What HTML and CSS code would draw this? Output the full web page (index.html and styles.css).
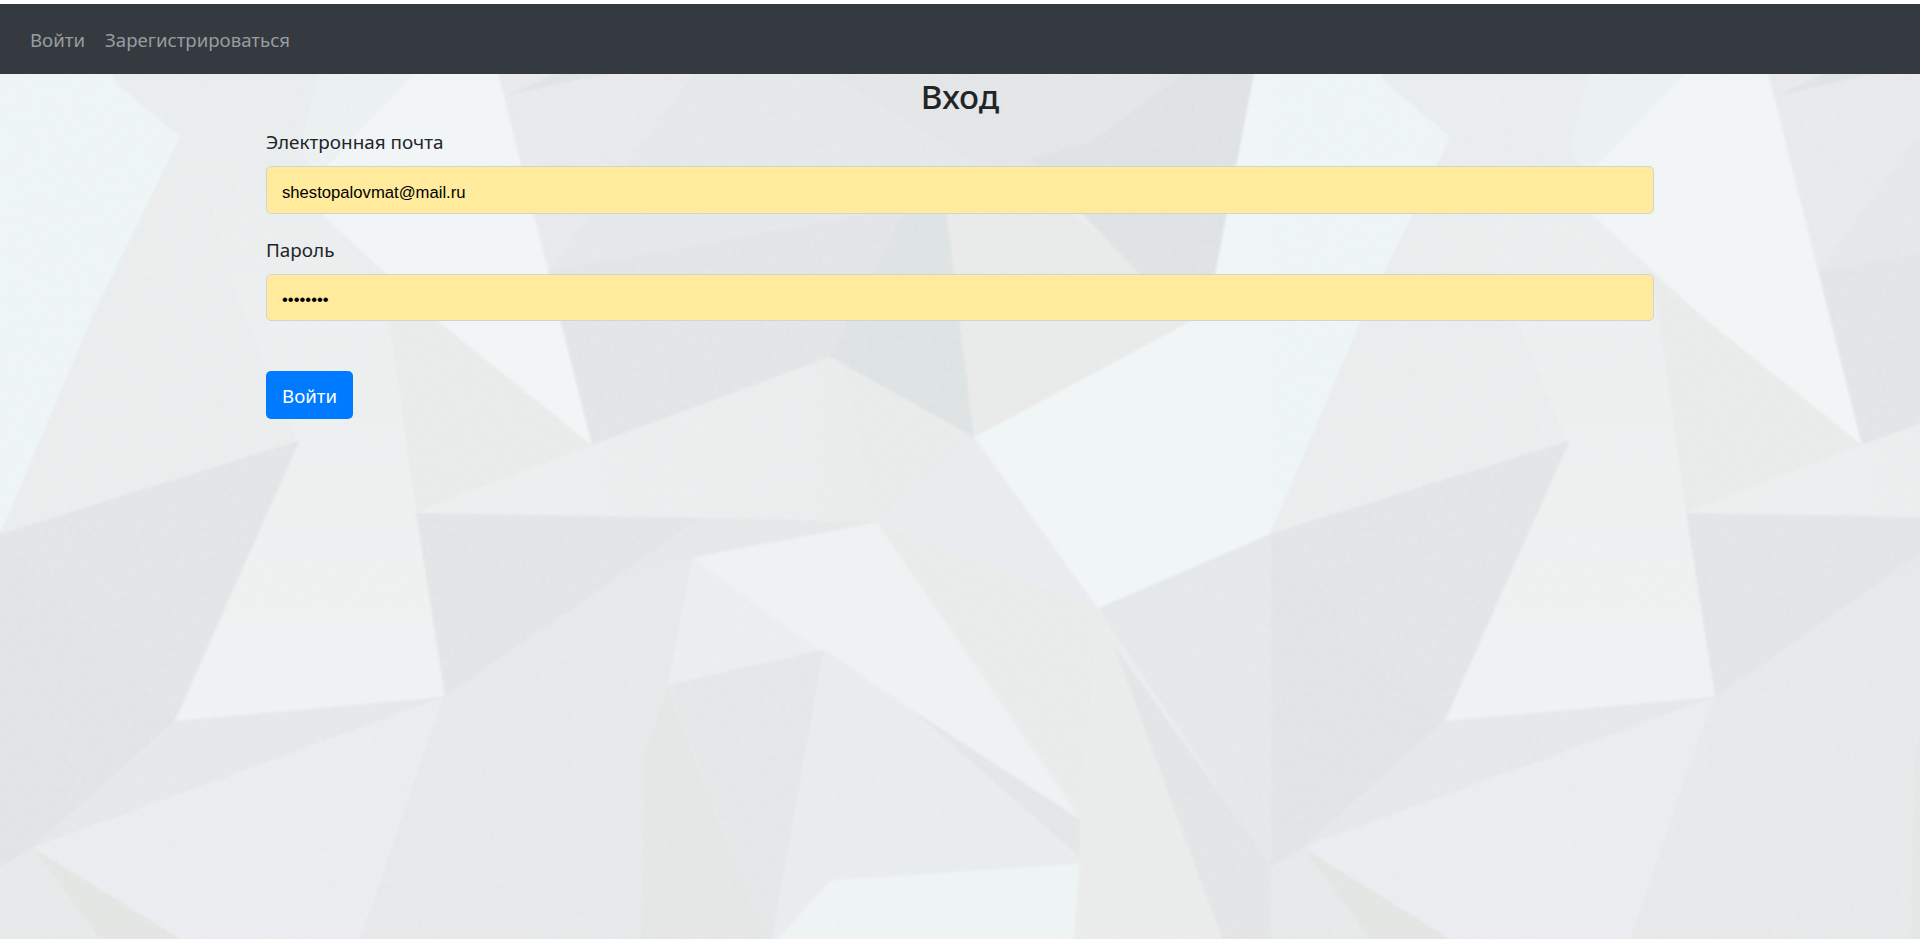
FILE: index.html
```html
<!DOCTYPE html>
<html lang="ru">
<head>
<meta charset="utf-8">
<title>Вход</title>
<link rel="stylesheet" href="styles.css">
</head>
<body>
<svg class="backdrop" viewBox="0 0 1920 939" preserveAspectRatio="none" aria-hidden="true">
  <defs>
    <filter id="soft" filterUnits="userSpaceOnUse" x="-10" y="-10" width="1940" height="960"><feGaussianBlur stdDeviation="1.1"/></filter>
    <filter id="grain" x="0" y="0" width="1" height="1">
      <feTurbulence type="fractalNoise" baseFrequency="0.22" numOctaves="2" seed="4"/>
      <feColorMatrix type="saturate" values="0.3"/>
      <feComponentTransfer><feFuncA type="linear" slope="0" intercept="1"/></feComponentTransfer>
    </filter>
    <linearGradient id="g1" x1="0" y1="0" x2="0" y2="1"><stop offset="0" stop-color="#e9ecec"/><stop offset="1" stop-color="#eff2f2"/></linearGradient>
    <linearGradient id="g2" x1="0" y1="0" x2="1" y2="0"><stop offset="0" stop-color="#ebefef"/><stop offset="1" stop-color="#e8eaea"/></linearGradient>
    <g id="tile">
      <rect width="1271" height="950" fill="#e8ecec"/>
      <path fill="#edf4f4" d="M-5 0H80L115 84 180 138 158 190 94 313 20 493 -5 540Z"/>
      <path fill="#eaf0f0" d="M320 70H425L320 185 300 150Z"/>
      <path fill="#e9ecec" d="M180 138 260 220 385 320 298 443 0 533 94 313Z"/>
      <path fill="url(#g1)" d="M200 155 300 170 385 300 416 512 445 695 175 719 298 443 230 280Z"/>
      <path fill="#f0f4f4" d="M420 70H497L592 445 437 321 300 195Z"/>
      <path fill="#e8eae9" d="M384 278 437 321 592 445 416 512Z"/>
      <path fill="#e2e3e5" d="M-5 535 0 533 300 440 175 719Z"/>
      <path fill="#dfe3e3" d="M-5 528 0 533 175 719 33 845 -5 868Z"/>
      <path fill="#e3e7e7" d="M175 719 445 695 33 845Z"/>
      <path fill="#e4e8e8" d="M-5 868 33 845 110 950H-5Z"/>
      <path fill="#e2e4e2" d="M33 845 205 950H110Z"/>
      <path fill="#e6e7e9" d="M443 695 560 620 640 950H355Z"/>
      <path fill="#e4e8e9" d="M443 695 640 560 700 550 668 690 640 950H540Z"/>
      <path fill="#e9ebef" d="M33 845 440 697 355 950H203Z"/>
      <path fill="url(#g2)" d="M592 445 830 357 974 437 877 522 416 512Z"/>
      <path fill="#e8eae9" d="M840 362 974 437 877 522Z"/>
      <path fill="#e0e4e4" d="M416 512 700 517 620 575 445 695Z"/>
      <path fill="#e4e6e7" d="M700 517 877 521 690 557 610 580Z"/>
      <path fill="#e7e8ea" d="M497 70H700L548 270Z"/>
      <path fill="#dfe2e3" d="M507 97 565 70H632Z"/>
      <path fill="#e3e7e8" d="M697 70H850L1000 170 940 200 548 271Z"/>
      <path fill="#e2e3e5" d="M548 271 945 200 895 240 830 357 592 445Z"/>
      <path fill="#e2e4e5" d="M820 70H1190L1050 172 985 170Z"/>
      <path fill="#dde1e1" d="M1190 70H1255L1212 290 1040 180Z"/>
      <path fill="#dce1e2" d="M945 190 974 437 830 357 900 220Z"/>
      <path fill="#e7e9e8" d="M942 178 1030 185 1212 318 974 437Z"/>
      <path fill="#dde1e1" d="M1030 160 1254 100 1210 290 1140 275Z"/>
      <path fill="#eff4f4" d="M974 437 1208 312 1255 70H1271V533L1098 607Z"/>
      <path fill="#e9eaee" d="M974 437 1098 607 1085 602 877 522Z"/>
      <path fill="#e3e7e8" d="M1098 607 1271 533V865Z"/>
      <path fill="#e2e3e5" d="M1104 630 1271 862V950H1227Z"/>
      <path fill="#e8eae9" d="M877 522 1100 607 1085 815Z"/>
      <path fill="#e9ebeb" d="M1100 607 1227 950H1070L1082 800Z"/>
      <path fill="#e9eded" d="M692 557 825 648 668 685Z"/>
      <path fill="#edf1f1" d="M692 557 877 522 1080 817 915 712 820 650Z"/>
      <path fill="#e2e6e6" d="M668 683 824 648 770 950Z"/>
      <path fill="#e3e5e4" d="M668 685 770 950H640L645 750Z"/>
      <path fill="#e9eaee" d="M824 648 915 710 835 875 770 950Z"/>
      <path fill="#e7ebeb" d="M912 708 1080 855V862L830 878Z"/>
      <path fill="#e1e5e6" d="M912 708 1080 817V855Z"/>
      <path fill="#edf3f3" d="M830 878 1080 861 1072 950H765Z"/>
    </g>
  </defs>
  <g filter="url(#soft)">
    <use href="#tile" x="1270"/>
    <use href="#tile"/>
  </g>
  <rect class="grain" width="1920" height="939" filter="url(#grain)"/>
</svg>
<nav class="navbar">
  <a class="nav-link" href="#">Войти</a>
  <a class="nav-link" href="#">Зарегистрироваться</a>
</nav>
<main class="container">
  <h1 class="title">Вход</h1>
  <form class="form">
    <label class="label" for="email">Электронная почта</label>
    <input class="control" id="email" type="text" value="shestopalovmat@mail.ru">
    <label class="label" for="password">Пароль</label>
    <input class="control control-password" id="password" type="password" value="password">
    <button class="btn" type="button">Войти</button>
  </form>
</main>
</body>
</html>
```
FILE: styles.css
```css
* {
  box-sizing: border-box;
}

body {
  margin: 0;
  height: 939px;
  overflow: hidden;
  border-top: 4px solid #fff;
  background: #e8ecec;
  color: #212529;
  font-family: "Noto Sans", "Open Sans", sans-serif;
  font-size: 18.65px;
}

.backdrop {
  position: absolute;
  top: -2px;
  left: 0;
  z-index: -1;
  width: 1920px;
  height: 944px;
  clip-path: inset(6px 0 0 0);
}

.grain {
  opacity: 0.3;
  mix-blend-mode: soft-light;
}

.navbar {
  display: flex;
  align-items: center;
  gap: 20px;
  height: 70px;
  padding: 0 30px;
  background: #343a40;
}

.nav-link {
  color: #999c9f;
  text-decoration: none;
}

.container {
  width: 1388px;
  margin: 0 auto;
}

.title {
  margin: 0;
  height: 53px;
  font-size: 33.2px;
  font-weight: 500;
  line-height: 46px;
  text-align: center;
}

.form {
  display: flex;
  flex-direction: column;
  align-items: flex-start;
}

.label {
  height: 39px;
  font-size: 18.9px;
  line-height: 30px;
}

.control {
  width: 100%;
  height: 48px;
  margin: 0 0 21px;
  padding: 5px 15px 0;
  border: 1px solid #ced4da;
  border-radius: 5px;
  background: #ffeb9b;
  color: #000;
  font-family: "Liberation Sans", Arial, sans-serif;
  font-size: 16.67px;
}

.control-password {
  height: 47px;
  padding-top: 4px;
  margin-bottom: 50px;
}

.btn {
  width: 87px;
  height: 48px;
  padding: 0;
  border: 0;
  border-radius: 5px;
  background: #007bff;
  color: #fff;
  font-family: inherit;
  font-size: 18.6px;
}
```
